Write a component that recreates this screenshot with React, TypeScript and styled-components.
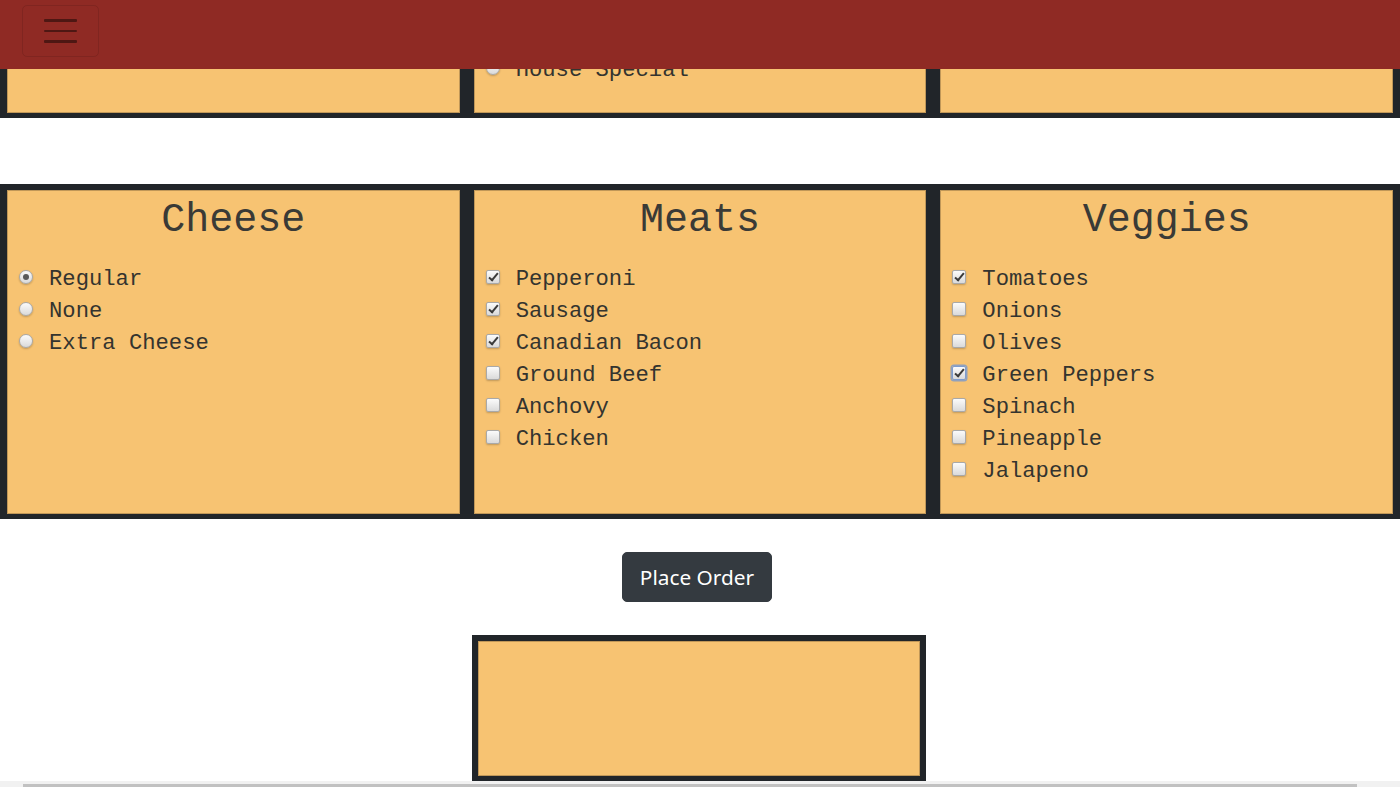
import React, { useLayoutEffect, useRef } from 'react';
import styled, { createGlobalStyle } from 'styled-components';

const GlobalStyle = createGlobalStyle`
  html, body {
    margin: 0;
    padding: 0;
    background: #fff;
    font-family: "Liberation Mono", "Courier New", monospace;
    color: #212529;
    scrollbar-width: none;
  }
  ::-webkit-scrollbar {
    display: none;
  }
`;

const Navbar = styled.nav`
  position: fixed;
  top: 0;
  left: 0;
  right: 0;
  height: 69px;
  box-sizing: border-box;
  padding: 5px 22px;
  background: #8f2a24;
  z-index: 10;
`;

const Toggler = styled.button`
  width: 77px;
  height: 52px;
  box-sizing: border-box;
  display: flex;
  flex-direction: column;
  align-items: center;
  justify-content: center;
  gap: 8px;
  background: transparent;
  border: 1px solid rgba(0, 0, 0, 0.1);
  border-radius: 5px;
  padding: 0;
  cursor: pointer;
`;

const TogglerBar = styled.span`
  display: block;
  width: 33px;
  height: 2.5px;
  border-radius: 1px;
  background: rgba(0, 0, 0, 0.45);
`;

const Main = styled.main`
  padding: 69px 0 220px;
`;

const PanelRow = styled.section<{ $gapAfter?: number }>`
  display: flex;
  gap: 14px;
  padding: 6px 7px 5px;
  background: #212529;
  margin-bottom: ${p => p.$gapAfter ?? 0}px;
`;

const Panel = styled.div`
  flex: 1;
  min-width: 0;
  background: #f7c372;
  box-shadow: inset 0 0 0 1px rgba(90, 70, 40, 0.35);
  padding: 7px 0 26px;
`;

const PanelTitle = styled.h1`
  margin: 0 0 19px;
  font-size: 40px;
  line-height: 48px;
  font-weight: 400;
  text-align: center;
  color: #3a3a36;
`;

const OptionList = styled.ul`
  list-style: none;
  margin: 0;
  padding: 0 0 0 12px;
`;

const OptionItem = styled.li`
  display: flex;
  align-items: flex-start;
  height: 32px;
  line-height: 32px;
  font-size: 22.2px;
  color: #34342f;
`;

const Choice = styled.input<{ $focus?: boolean }>`
  appearance: none;
  -webkit-appearance: none;
  flex: none;
  position: relative;
  width: 14px;
  height: 14px;
  margin: 6px 16px 0 0;
  box-sizing: border-box;
  border: 1px solid ${p => (p.$focus ? '#7d9ccf' : '#a9a9a9')};
  border-radius: ${p => (p.type === 'radio' ? '50%' : '2px')};
  background: linear-gradient(#fbfbfb, #dadada);
  box-shadow: ${p =>
    p.$focus
      ? '0 0 0 1.5px rgba(110, 150, 215, 0.75)'
      : '0 1px 2px rgba(0, 0, 0, 0.22)'};
  outline: none;

  &[type='checkbox']:checked::after {
    content: '';
    position: absolute;
    left: 4px;
    top: 0px;
    width: 3px;
    height: 8px;
    border: solid #3a3a3a;
    border-width: 0 2.5px 2.5px 0;
    transform: rotate(40deg);
  }

  &[type='radio']:checked::after {
    content: '';
    position: absolute;
    left: 3px;
    top: 3px;
    width: 6px;
    height: 6px;
    border-radius: 50%;
    background: #5a5a5a;
  }
`;

const OrderBar = styled.div`
  display: flex;
  justify-content: center;
  padding: 33px 6px 33px 0;
`;

const OrderButton = styled.button`
  width: 150px;
  height: 50px;
  box-sizing: border-box;
  border: 1px solid #343a40;
  border-radius: 5px;
  background: #343a40;
  color: #fff;
  font-family: "Noto Sans", "Open Sans", sans-serif;
  font-size: 20.8px;
  cursor: pointer;
`;

const Summary = styled.div`
  width: 454px;
  height: 147px;
  box-sizing: border-box;
  margin-left: calc(50% - 228px);
  border: 6px solid #212529;
  background: #f7c372;
  box-shadow: inset 0 0 0 1px rgba(90, 70, 40, 0.35);
`;

const ScrollTrack = styled.div`
  position: fixed;
  left: 0;
  right: 0;
  bottom: 0;
  height: 6px;
  background: #f1f1f1;
  z-index: 20;
`;

const ScrollThumb = styled.div`
  margin: 3px 43px 0 23px;
  height: 3px;
  background: #c1c1c1;
`;

type Option = { label: string; checked?: boolean; focus?: boolean };
type Group = { title: string; kind: 'radio' | 'checkbox'; options: Option[] };

const topGroups: Group[] = [
  {
    title: 'Size',
    kind: 'radio',
    options: [{ label: 'Small' }, { label: 'Medium', checked: true }, { label: 'Large' }, { label: 'Extra Large' }],
  },
  {
    title: 'Sauce',
    kind: 'radio',
    options: [
      { label: 'Marinara', checked: true },
      { label: 'Alfredo' },
      { label: 'BBQ' },
      { label: 'Garlic Parmesan' },
      { label: 'House Special' },
    ],
  },
  {
    title: 'Crust',
    kind: 'radio',
    options: [{ label: 'Hand Tossed', checked: true }, { label: 'Thin' }, { label: 'Deep Dish' }],
  },
];

const toppingGroups: Group[] = [
  {
    title: 'Cheese',
    kind: 'radio',
    options: [{ label: 'Regular', checked: true }, { label: 'None' }, { label: 'Extra Cheese' }],
  },
  {
    title: 'Meats',
    kind: 'checkbox',
    options: [
      { label: 'Pepperoni', checked: true },
      { label: 'Sausage', checked: true },
      { label: 'Canadian Bacon', checked: true },
      { label: 'Ground Beef' },
      { label: 'Anchovy' },
      { label: 'Chicken' },
    ],
  },
  {
    title: 'Veggies',
    kind: 'checkbox',
    options: [
      { label: 'Tomatoes', checked: true },
      { label: 'Onions' },
      { label: 'Olives' },
      { label: 'Green Peppers', checked: true, focus: true },
      { label: 'Spinach' },
      { label: 'Pineapple' },
      { label: 'Jalapeno' },
    ],
  },
];

const GroupPanel: React.FC<{ group: Group }> = ({ group }) => (
  <Panel>
    <PanelTitle>{group.title}</PanelTitle>
    <OptionList>
      {group.options.map(opt => (
        <OptionItem key={opt.label}>
          <Choice
            type={group.kind}
            name={group.title}
            defaultChecked={!!opt.checked}
            $focus={opt.focus}
          />
          {opt.label}
        </OptionItem>
      ))}
    </OptionList>
  </Panel>
);

export default function App() {
  const toppingsRef = useRef<HTMLElement>(null);

  // the reference is scrolled so the toppings row sits just under the navbar
  useLayoutEffect(() => {
    const el = toppingsRef.current;
    if (!el) return;
    const top = el.getBoundingClientRect().top + window.scrollY;
    window.scrollTo(0, top - 184);
  }, []);

  return (
    <>
      <GlobalStyle />
      <Navbar>
        <Toggler aria-label="Toggle navigation">
          <TogglerBar />
          <TogglerBar />
          <TogglerBar />
        </Toggler>
      </Navbar>
      <Main>
        <PanelRow $gapAfter={66}>
          {topGroups.map(g => (
            <GroupPanel key={g.title} group={g} />
          ))}
        </PanelRow>
        <PanelRow ref={toppingsRef}>
          {toppingGroups.map(g => (
            <GroupPanel key={g.title} group={g} />
          ))}
        </PanelRow>
        <OrderBar>
          <OrderButton>Place Order</OrderButton>
        </OrderBar>
        <Summary />
      </Main>
      <ScrollTrack>
        <ScrollThumb />
      </ScrollTrack>
    </>
  );
}
